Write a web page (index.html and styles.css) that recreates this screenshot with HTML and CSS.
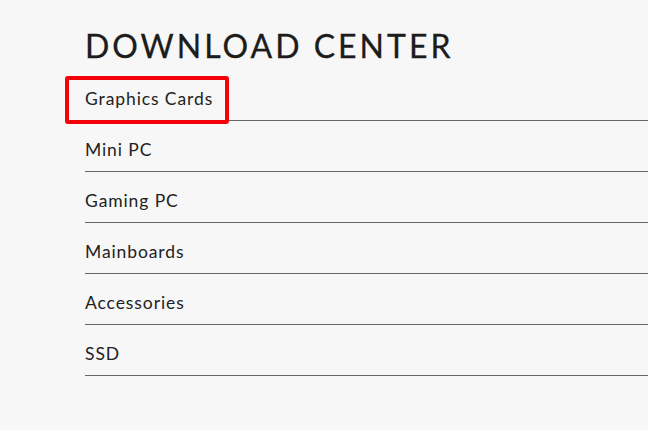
FILE: index.html
```html
<!DOCTYPE html>
<html lang="en">
<head>
<meta charset="utf-8">
<title>Download Center</title>
<link rel="stylesheet" href="styles.css">
</head>
<body>
<main class="page">
  <h1 class="title">DOWNLOAD CENTER</h1>
  <ul class="cats">
    <li class="cat cat-active"><a href="#">Graphics Cards</a><span class="highlight"></span></li>
    <li class="cat"><a href="#">Mini PC</a></li>
    <li class="cat"><a href="#">Gaming PC</a></li>
    <li class="cat"><a href="#">Mainboards</a></li>
    <li class="cat"><a href="#">Accessories</a></li>
    <li class="cat"><a href="#">SSD</a></li>
  </ul>
</main>
</body>
</html>
```
FILE: styles.css
```css
html, body {
  margin: 0;
  padding: 0;
  background: #f7f7f7;
}
body {
  font-family: Lato, "Open Sans", sans-serif;
  color: #222;
  overflow: hidden;
}
.page {
  padding: 27px 0 0 85px;
}
.title {
  margin: 0;
  font-size: 32px;
  line-height: 38px;
  font-weight: 400;
  letter-spacing: 3px;
  color: #1c1c1c;
  -webkit-text-stroke: 0.3px #1c1c1c;
}
.cats {
  list-style: none;
  margin: 5px 0 0;
  padding: 0;
}
.cat {
  position: relative;
  height: 50px;
  box-sizing: content-box;
  border-bottom: 1px solid #666;
}
.cat a {
  display: block;
  padding-top: 19px;
  font-size: 17.5px;
  line-height: 20px;
  letter-spacing: 0.9px;
  color: #222;
  text-decoration: none;
}
.highlight {
  position: absolute;
  left: -20px;
  top: 6px;
  width: 156px;
  height: 40px;
  border: 4px solid #f40008;
  border-radius: 3px;
}
```
